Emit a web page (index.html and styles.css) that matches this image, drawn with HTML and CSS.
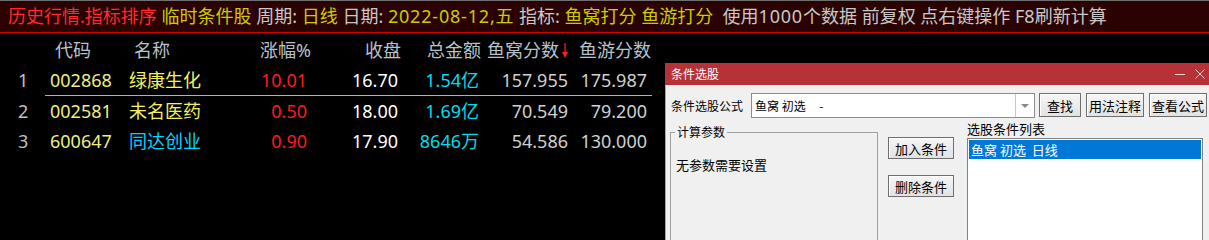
FILE: index.html
```html
<!DOCTYPE html>
<html lang="zh">
<head>
<meta charset="utf-8">
<link rel="stylesheet" href="styles.css">
</head>
<body>
<div class="topbar"><span class="red">历史行情.指标排序</span> <span class="yel">临时条件股</span> <span class="gry">周期:</span> <span class="yel">日线</span> <span class="gry">日期:</span> <span class="yel n">2022-08-12,五</span> <span class="gry">指标:</span> <span class="yel">鱼窝打分 鱼游打分</span>  <span class="gry">使用<span class="n">1000</span>个数据 前复权 点右键操作 F8刷新计算</span></div>

<div class="table">
  <div class="row head">
    <div class="num"></div>
    <div class="cells">
      <div class="c code">代码</div>
      <div class="c name">名称</div>
      <div class="c r pct">涨幅%</div>
      <div class="c r close">收盘</div>
      <div class="c r amt">总金额</div>
      <div class="c r s1">鱼窝分数<svg class="arrow" width="6" height="15" viewBox="0 0 6 15"><line x1="3" y1="0" x2="3" y2="12" stroke="#ff2020" stroke-width="1.2"/><polygon points="0,9 6,9 3,15" fill="#ff2020"/></svg></div>
      <div class="c r s2">鱼游分数</div>
    </div>
  </div>
  <div class="row first">
    <div class="num">1</div>
    <div class="cells">
      <div class="c code v">002868</div>
      <div class="c name v">绿康生化</div>
      <div class="c r pct v">10.01</div>
      <div class="c r close v">16.70</div>
      <div class="c r amt v">1.54亿</div>
      <div class="c r s1 v">157.955</div>
      <div class="c r s2 v">175.987</div>
    </div>
  </div>
  <div class="row">
    <div class="num">2</div>
    <div class="cells">
      <div class="c code v">002581</div>
      <div class="c name v">未名医药</div>
      <div class="c r pct v">0.50</div>
      <div class="c r close v">18.00</div>
      <div class="c r amt v">1.69亿</div>
      <div class="c r s1 v">70.549</div>
      <div class="c r s2 v">79.200</div>
    </div>
  </div>
  <div class="row">
    <div class="num">3</div>
    <div class="cells">
      <div class="c code v">600647</div>
      <div class="c name v cyan">同达创业</div>
      <div class="c r pct v">0.90</div>
      <div class="c r close v">17.90</div>
      <div class="c r amt v">8646万</div>
      <div class="c r s1 v">54.586</div>
      <div class="c r s2 v">130.000</div>
    </div>
  </div>
</div>

<div class="dialog">
  <div class="titlebar">
    <span class="title">条件选股</span>
    <span class="ctrls"><span class="min"></span><svg class="x" width="10" height="10" viewBox="0 0 10 10"><path d="M0.5 0.5 L9.5 9.5 M9.5 0.5 L0.5 9.5" stroke="#f3d6d6" stroke-width="1"/></svg></span>
  </div>
  <div class="dbody">
    <div class="frow">
      <div class="flabel">条件选股公式</div>
      <div class="combo"><span class="ctext">鱼窝 初选&nbsp;&nbsp;&nbsp;&nbsp;&nbsp;-</span><span class="drop"><span class="tri"></span></span></div>
      <div class="btn b1">查找</div>
      <div class="btn b2">用法注释</div>
      <div class="btn b2">查看公式</div>
    </div>
    <div class="srow">
      <fieldset class="group">
        <legend>计算参数</legend>
        <div class="noparam">无参数需要设置</div>
      </fieldset>
      <div class="bcol">
        <div class="btn b3">加入条件</div>
        <div class="btn b3">删除条件</div>
      </div>
      <div class="lcol">
        <div class="llabel">选股条件列表</div>
        <div class="listbox">
          <div class="item sel">鱼窝 初选&nbsp;&nbsp;日线</div>
        </div>
      </div>
    </div>
  </div>
</div>
</body>
</html>
```

FILE: styles.css
```css
html, body {
  margin: 0;
  padding: 0;
}
body {
  width: 1209px;
  height: 240px;
  background: #000;
  overflow: hidden;
  position: relative;
  font-family: "Noto Sans", "Noto Sans CJK SC", sans-serif;
}

.topbar {
  height: 31px;
  border-top: 1px solid #707070;
  border-bottom: 1px solid #d40000;
  background: #2a0202;
  padding-left: 8px;
  font-size: 18px;
  line-height: 31px;
  white-space: pre;
  color: #c8c8c8;
}
.topbar .red { color: #ff2a2a; }
.topbar .yel { color: #cccc00; }
.topbar .gry { color: #c8c8c8; }
.topbar .n { letter-spacing: 0.8px; }

.table {
  padding-top: 2px;
  font-size: 18px;
}
.row {
  display: flex;
  height: 30px;
  line-height: 30px;
}
.row.first { height: 31px; }
.num {
  width: 37px;
  margin-left: 8px;
  padding-left: 10px;
  box-sizing: border-box;
  color: #c0c0c0;
}
.cells {
  display: grid;
  grid-template-columns: 80px 95px 92px 90px 80px 88px 82px;
  height: 30px;
}
.row.first .cells {
  border-bottom: 1px solid #c8c800;
}
.c { white-space: nowrap; }
.c.r { text-align: right; }
.head .c { color: #b8c2cc; }
.head .code { padding-left: 10px; }
.head .name { padding-left: 9px; }
.head .pct, .head .close, .head .amt, .head .s2 { padding-right: 1px; }
.head .s1 { padding-right: 2px; }
.arrow { margin-left: 3px; vertical-align: -1px; }

.v.code { padding-left: 5px; color: #eeee80; }
.v.name { padding-left: 4px; color: #f2f260; }
.v.name.cyan { color: #00d4ff; }
.v.pct { padding-right: 5px; color: #ff1a1a; }
.v.close { padding-right: 4px; color: #ffffff; }
.v.amt { padding-right: 3px; color: #00dcec; }
.v.s1 { padding-right: 2px; color: #d0d0d0; }
.v.s2 { padding-right: 5px; color: #d0d0d0; }

/* dialog window */
.dialog {
  position: absolute;
  left: 665px;
  top: 63px;
  width: 548px;
  height: 177px;
  overflow: hidden;
  font-family: "Noto Sans CJK SC", sans-serif;
  font-size: 12px;
  color: #000;
}
.titlebar {
  height: 22px;
  background: #b63237;
  display: flex;
  align-items: center;
  justify-content: space-between;
  padding-left: 6px;
  padding-right: 8px;
}
.title { color: #fff; line-height: 22px; }
.ctrls { display: flex; align-items: center; gap: 10px; }
.min {
  display: block;
  width: 10px;
  height: 1px;
  background: #f3d6d6;
}
.dbody {
  height: 155px;
  background: #f0f0f0;
  border-left: 1px solid #a8a8a8;
  padding: 8px 0 0 4px;
}
.frow {
  display: flex;
  align-items: flex-start;
}
.flabel {
  width: 80px;
  padding-left: 1px;
  line-height: 25px;
}
.combo {
  width: 284px;
  height: 25px;
  box-sizing: border-box;
  border: 1px solid #8c8c8c;
  background: #fff;
  display: flex;
  justify-content: space-between;
}
.ctext { padding-left: 3px; line-height: 23px; white-space: pre; }
.drop {
  width: 18px;
  border-left: 1px solid #c8c8c8;
  display: flex;
  align-items: center;
  justify-content: center;
}
.tri {
  width: 0;
  height: 0;
  border-left: 4px solid transparent;
  border-right: 4px solid transparent;
  border-top: 4px solid #8a8a8a;
}
.btn {
  box-sizing: border-box;
  height: 24px;
  border: 1px solid #6e6e6e;
  background: linear-gradient(#f6f6f6, #e2e2e2);
  display: flex;
  align-items: center;
  justify-content: center;
  white-space: nowrap;
  font-size: 13px;
  box-shadow: inset 1px 1px 0 #fff;
}
.b1 { width: 42px; margin-left: 4px; }
.b2 { width: 58px; margin-left: 5px; }
.srow {
  display: flex;
  align-items: flex-start;
  margin-top: 3px;
}
.group {
  margin: 3px 0 0 0;
  padding: 17px 0 0 5px;
  width: 208px;
  height: 140px;
  box-sizing: border-box;
  border: 1px solid #a0a0a0;
  min-width: 0;
}
.group legend {
  margin-left: -1px;
  padding: 0 2px;
  line-height: 16px;
  font-size: 12px;
}
.noparam { line-height: 16px; font-size: 13px; }
.bcol {
  display: flex;
  flex-direction: column;
  gap: 16px;
  margin-left: 10px;
  margin-top: 16px;
}
.b3 { width: 66px; height: 22px; }
.lcol {
  margin-left: 13px;
  width: 236px;
}
.llabel { line-height: 16px; font-size: 13px; }
.listbox {
  margin-top: 1px;
  height: 120px;
  box-sizing: border-box;
  border: 1px solid #828282;
  background: #fff;
  padding: 1px;
}
.item {
  height: 19px;
  line-height: 19px;
  padding-left: 2px;
  font-size: 13px;
}
.item.sel { background: #0078d7; color: #fff; }
```
